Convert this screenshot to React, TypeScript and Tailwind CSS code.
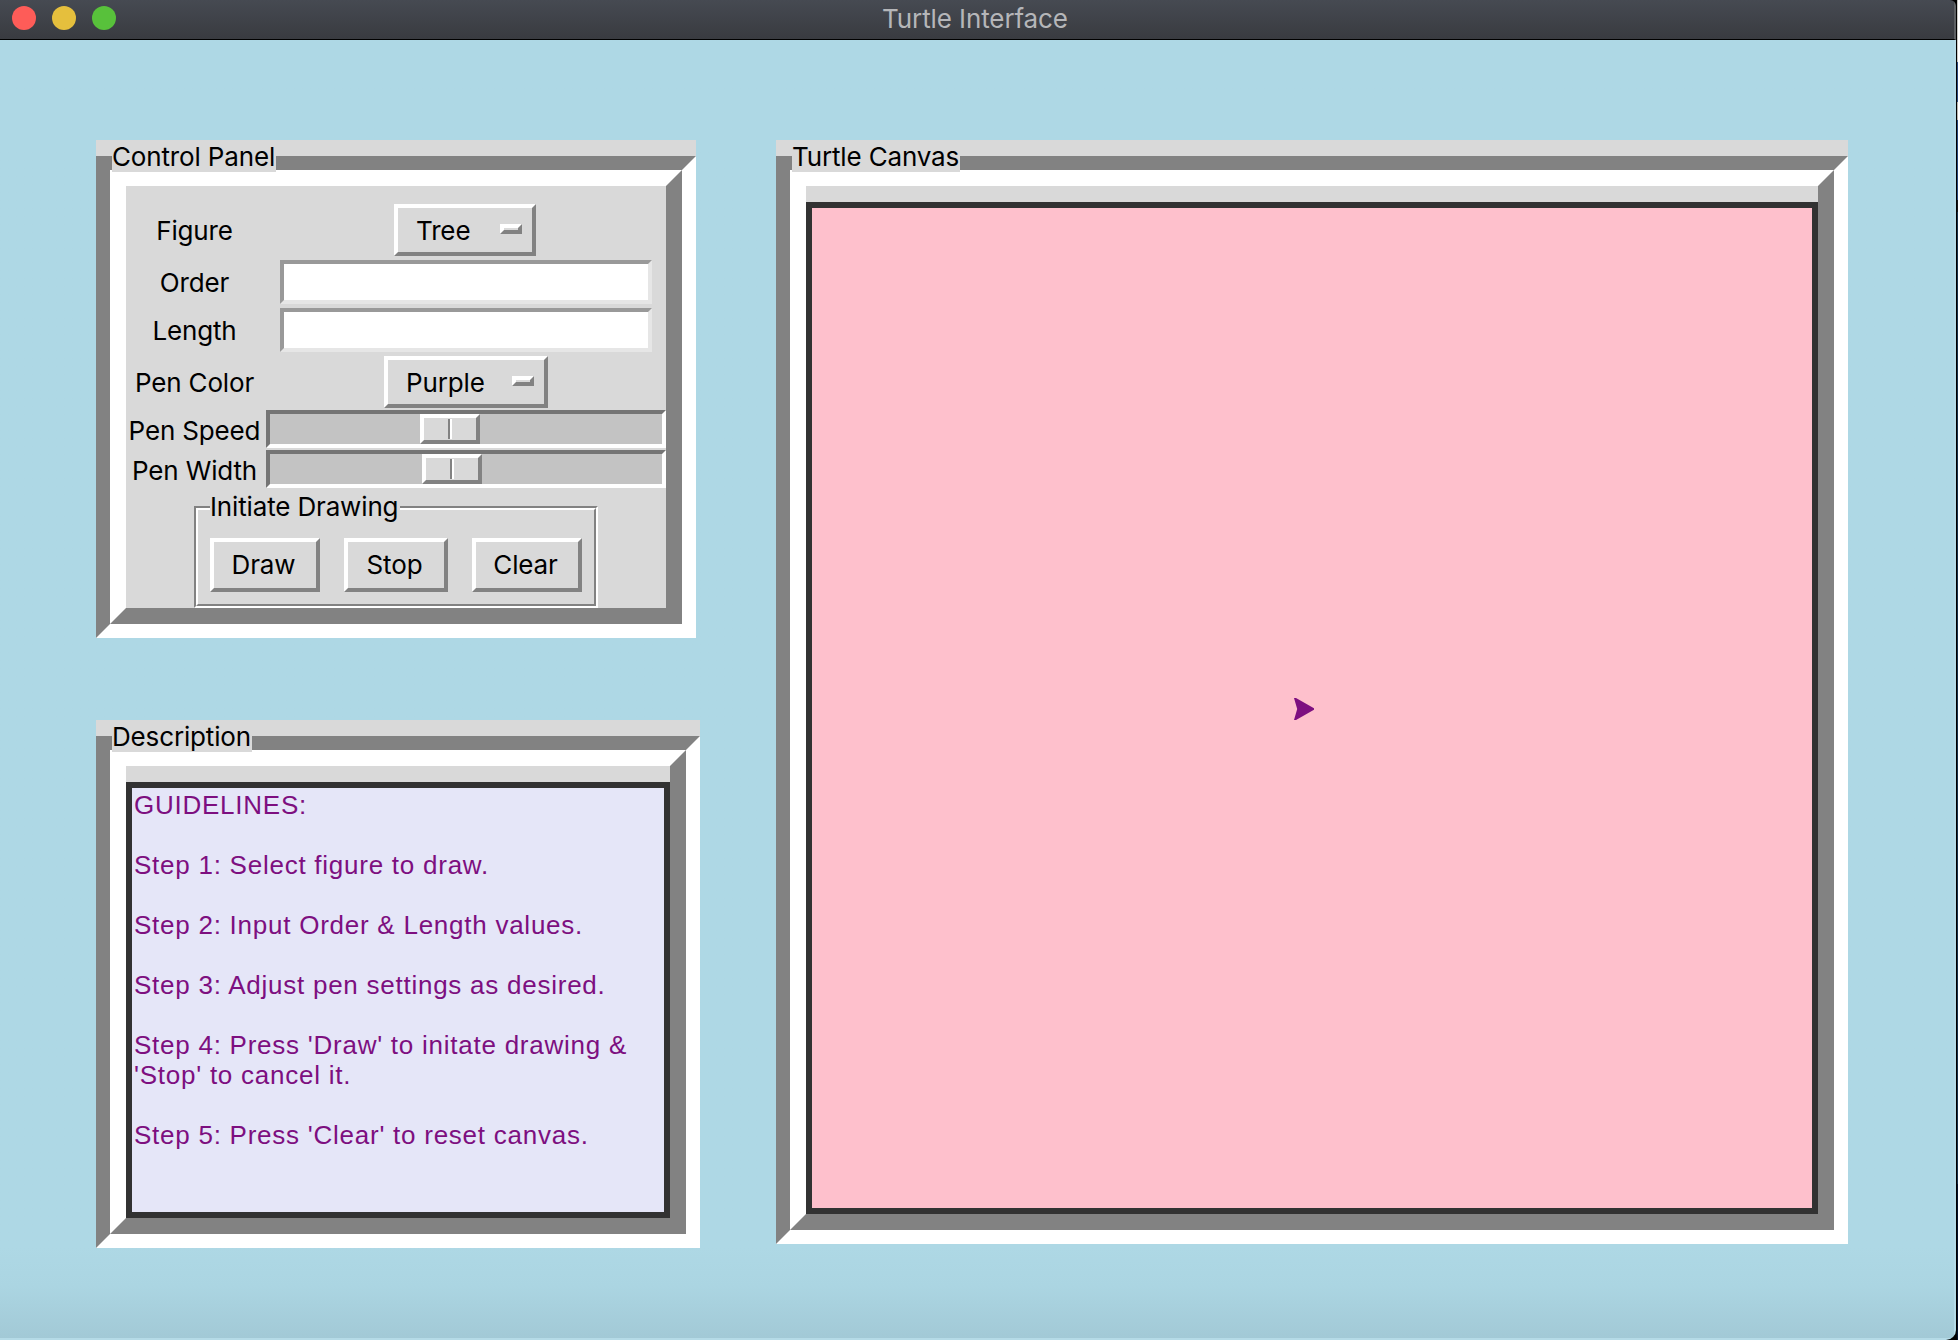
import { ReactNode } from "react";

type GroupProps = { title: string; legendClass: string; className: string; children: ReactNode };

/* Labelled frame with a thick two-tone groove border. */
function GroupFrame({ title, legendClass, className, children }: GroupProps) {
  return (
    <section className={`relative bg-[#d9d9d9] pt-4 ${className}`}>
      <div className="h-full border-[14px] border-t-[#828282] border-r-white border-b-white border-l-[#828282]">
        <div className="h-full border-[16px] border-t-white border-r-[#828282] border-b-[#828282] border-l-white">
          {children}
        </div>
      </div>
      <h2 className={`absolute top-0 left-4 h-8 bg-[#d9d9d9] pt-px whitespace-nowrap ${legendClass}`}>{title}</h2>
    </section>
  );
}

const raised = "border-4 border-t-white border-l-white border-r-[#828282] border-b-[#828282]";

function Row({ label, className, children }: { label: string; className: string; children: ReactNode }) {
  return (
    <div className={`flex items-center ${className}`}>
      <span className="w-[138px] shrink-0 pt-[2px] pr-px text-center">{label}</span>
      {children}
    </div>
  );
}

function OptionMenu({ value, className }: { value: string; className: string }) {
  return (
    <button className={`flex h-[52px] items-center justify-between bg-[#d9d9d9] pr-[10px] pl-[18px] ${raised} ${className}`}>
      <span className="pt-[2px]">{value}</span>
      <span className={`mb-[2px] h-[10px] w-[22px] bg-[#d9d9d9] ${raised}`} />
    </button>
  );
}

function Entry() {
  return (
    <input
      className="ml-4 h-11 w-[372px] border-4 border-t-[#999999] border-r-[#e6e6e6] border-b-[#e6e6e6] border-l-[#999999] bg-white outline-none"
    />
  );
}

function Scale({ offsetClass }: { offsetClass: string }) {
  return (
    <div className="mb-[2px] ml-[2px] h-[38px] w-[400px] border-4 border-t-[#757575] border-r-white border-b-white border-l-[#757575] bg-[#c3c3c3]">
      <div className={`flex h-[30px] w-[60px] justify-center bg-[#d9d9d9] ${raised} ${offsetClass}`}>
        <div className="my-px w-1 border-r-2 border-l-2 border-l-[#828282] border-r-white" />
      </div>
    </div>
  );
}

function PushButton({ children, className }: { children: string; className: string }) {
  return (
    <button className={`h-[54px] bg-[#d9d9d9] pr-[3px] ${raised} ${className}`}>{children}</button>
  );
}

const guidelines = [
  "GUIDELINES:",
  "Step 1: Select figure to draw.",
  "Step 2: Input Order & Length values.",
  "Step 3: Adjust pen settings as desired.",
  "Step 4: Press 'Draw' to initate drawing &\n'Stop' to cancel it.",
  "Step 5: Press 'Clear' to reset canvas.",
];

export default function App() {
  return (
    <div className="flex h-[1340px] w-[1958px] overflow-hidden bg-[#04122c] font-['Inter',sans-serif] text-[26px] leading-8 tracking-[-0.15px] text-black">
      <div className="h-full w-[1957px] shrink-0 border-r border-black bg-black">
        <div className="flex h-full w-[1956px] flex-col overflow-hidden rounded-tr-[6px] rounded-br-[10px]">
          <header className="relative flex h-10 shrink-0 items-center justify-center border-r-2 border-b border-r-[#5d6063] border-b-black bg-linear-to-b from-[#464a52] to-[#393b40] pr-1 pb-px">
            <div className="absolute top-[6px] left-3 flex gap-4">
              <span className="size-6 rounded-full bg-[#fe5c58]" />
              <span className="size-6 rounded-full bg-[#e5bf3d]" />
              <span className="size-6 rounded-full bg-[#58c13b]" />
            </div>
            <h1 className="tracking-[-0.1px] text-[#b5b6b9]">Turtle Interface</h1>
          </header>

          <main className="flex flex-1 gap-[76px] border-r-2 border-b-2 border-[#b5dbe7] bg-linear-to-b from-[#aed8e5] from-93% via-[#abd5e2] via-96% to-[#a2c9d6] pt-[100px] pl-24">
            <div className="flex w-[604px] flex-col gap-[82px]">
              <GroupFrame title="Control Panel" legendClass="w-[164px]" className="h-[498px] w-[600px]">
                <div className="flex h-full flex-col pt-4">
                  <Row label="Figure" className="h-14">
                    <OptionMenu value="Tree" className="ml-[130px] w-[142px]" />
                  </Row>
                  <Row label="Order" className="h-12">
                    <Entry />
                  </Row>
                  <Row label="Length" className="h-12">
                    <Entry />
                  </Row>
                  <Row label="Pen Color" className="h-14">
                    <OptionMenu value="Purple" className="ml-[120px] w-[164px]" />
                  </Row>
                  <Row label="Pen Speed" className="h-10">
                    <Scale offsetClass="ml-[150px]" />
                  </Row>
                  <Row label="Pen Width" className="h-10">
                    <Scale offsetClass="ml-[152px]" />
                  </Row>
                  <div className="relative ml-[68px] h-[118px] w-[404px] pt-4">
                    <div className="h-full border-2 border-t-[#828282] border-r-white border-b-white border-l-[#828282]">
                      <div className="flex h-full gap-6 border-2 border-t-white border-r-[#828282] border-b-[#828282] border-l-white pt-7 pl-3">
                        <PushButton className="w-[110px]">Draw</PushButton>
                        <PushButton className="w-[104px]">Stop</PushButton>
                        <PushButton className="w-[110px]">Clear</PushButton>
                      </div>
                    </div>
                    <h3 className="absolute top-0 left-4 h-8 w-[190px] bg-[#d9d9d9] pt-px whitespace-nowrap">Initiate Drawing</h3>
                  </div>
                </div>
              </GroupFrame>

              <GroupFrame title="Description" legendClass="w-[140px]" className="h-[528px] w-[604px]">
                <div className="h-full pt-4">
                  <div className="flex h-full flex-col gap-[30px] border-[6px] border-[#323232] bg-[#e5e6f8] pt-[2px] pl-[2px] font-['Liberation_Sans',sans-serif] leading-[30px] tracking-[0.75px] whitespace-pre text-[#7d0f80]">
                    {guidelines.map((line) => (
                      <p key={line}>{line}</p>
                    ))}
                  </div>
                </div>
              </GroupFrame>
            </div>

            <GroupFrame title="Turtle Canvas" legendClass="w-[168px]" className="h-[1104px] w-[1072px]">
              <div className="h-full pt-4">
                <div className="relative h-full border-[6px] border-[#323232] bg-[#fec0cc]">
                  <svg className="absolute top-[489px] left-[481px]" width="24" height="24" viewBox="0 0 24 24">
                    <path d="M1 1h2L21 11.2v1.6L3 23H1l3.2-11z" fill="#7d0f80" />
                  </svg>
                </div>
              </div>
            </GroupFrame>
          </main>
        </div>
      </div>
      {/* sliver of the desktop behind the window */}
      <div className="flex w-px flex-col">
        <div className="h-[62px] bg-[#c9c8c4]" />
        <div className="h-10 bg-[#2c4a80]" />
        <div className="h-[18px] bg-[#b5b3ac]" />
        <div className="h-20 bg-[#27477c]" />
        <div className="h-3 bg-[#14161a]" />
        <div className="h-[972px] bg-[#16304a]" />
        <div className="flex-1 bg-[#04122c]" />
      </div>
    </div>
  );
}
